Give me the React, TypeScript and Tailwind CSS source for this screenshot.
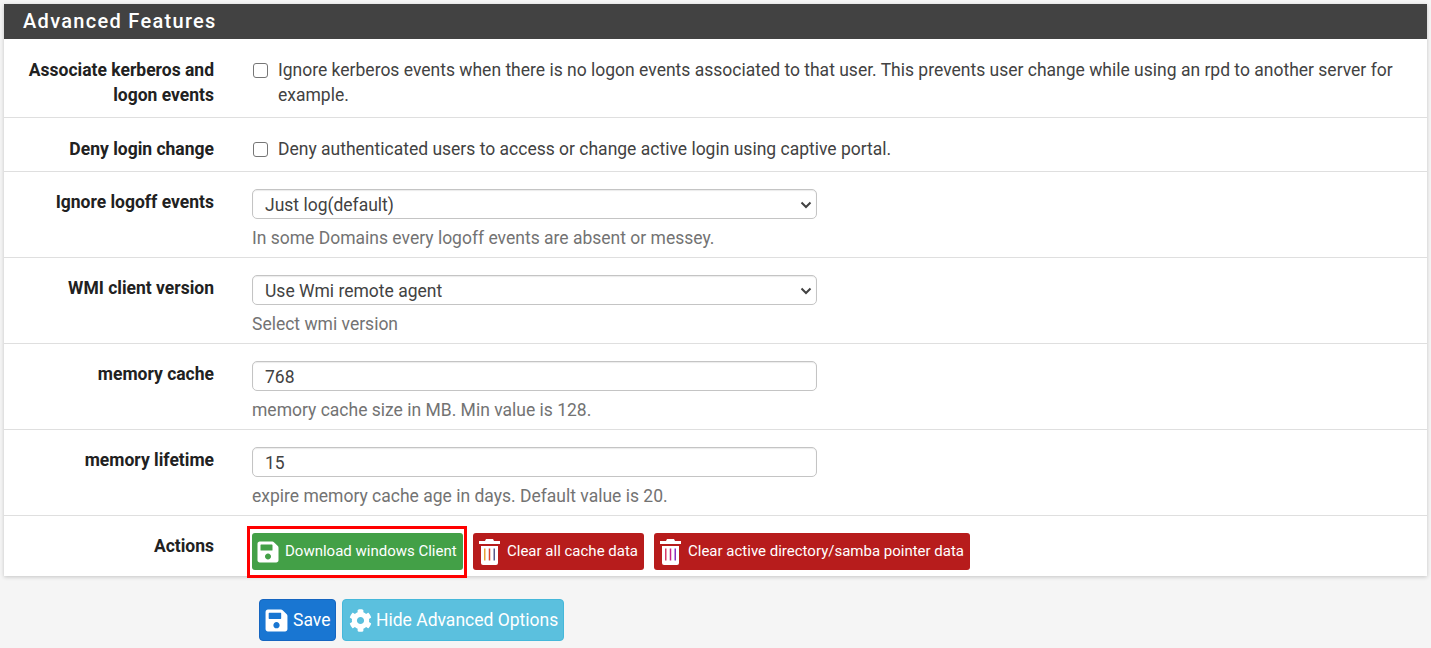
import React from "react";
import { FaCog, FaSave } from "react-icons/fa";

// Trash icon, the stripes pick up the colour fringes seen in the screenshot
const Trash = ({ stripes }: { stripes: string[] }) => (
  <svg width="21" height="27" viewBox="0 0 21 27" className="shrink-0">
    <path d="M7 1h7l1 2h6v3H0V3h6z" fill="#fff" />
    <path d="M2 8h17v17a2 2 0 0 1-2 2H4a2 2 0 0 1-2-2z" fill="#fff" />
    <rect x="5" y="10.500" width="1.500" height="12" fill={stripes[0]} />
    <rect x="9.750" y="10.500" width="1.500" height="12" fill={stripes[1]} />
    <rect x="14.500" y="10.500" width="1.500" height="12" fill={stripes[2]} />
  </svg>
);

const Row = ({
  label,
  children,
  className = "",
  labelClass = "pt-[18px]",
}: {
  label: React.ReactNode;
  children: React.ReactNode;
  className?: string;
  labelClass?: string;
}) => (
  <div className={`flex border-b border-[#dfdfdf] last:border-b-0 ${className}`}>
    <div className={`w-[210px] shrink-0 text-right font-bold text-[#212121] leading-[25px] ${labelClass}`}>
      {label}
    </div>
    <div className="ml-[38px] min-w-0 flex-1 pt-[17px] pr-[22px]">{children}</div>
  </div>
);

const CheckText = ({ children, top = "" }: { children: React.ReactNode; top?: string }) => (
  <div className={`flex items-start leading-[25px] ${top}`}>
    <span className="mt-[5px] ml-px h-[15px] w-[15px] shrink-0 rounded-[3px] border border-[#767676] bg-white" />
    <span className="ml-[10px] text-[#424242]">{children}</span>
  </div>
);

const Select = ({ value }: { value: string }) => (
  <div className="relative h-[30px] w-[565px]">
    <select
      defaultValue={value}
      className="h-full w-full appearance-none rounded-[5px] border border-[#c4c4c4] bg-white pt-[2px] pl-3 text-[17.5px] text-[#424242] shadow-[inset_0_1px_1px_rgba(0,0,0,0.08)]"
    >
      <option>{value}</option>
    </select>
    <svg
      width="12"
      height="8"
      viewBox="0 0 12 8"
      className="pointer-events-none absolute top-[12px] right-[5px]"
    >
      <path d="M1.500 1.500 6 6l4.500-4.500" fill="none" stroke="#424242" strokeWidth="2" />
    </svg>
  </div>
);

const TextInput = ({ value }: { value: string }) => (
  <input
    defaultValue={value}
    className="block h-[30px] w-[565px] rounded-[5px] border border-[#c4c4c4] bg-white pt-px pl-3 text-[17.5px] text-[#424242] shadow-[inset_0_1px_1px_rgba(0,0,0,0.08)]"
  />
);

const Help = ({ children }: { children: React.ReactNode }) => (
  <p className="mt-[7px] leading-[24px] text-[#737373]">{children}</p>
);

export default function App() {
  return (
    <div className="min-h-[648px] bg-[#f5f5f5] px-1 pt-1 font-['Roboto',sans-serif] text-[17.5px]">
      <div className="bg-white shadow-[0_1px_4px_rgba(0,0,0,0.2)]">
        <h2 className="flex h-[35px] items-center bg-[#424242] pb-[2px] pl-[19px] text-[20px] font-medium tracking-[1.300px] text-white">
          Advanced Features
        </h2>
        <div className="pt-px">
          <Row label={<>Associate kerberos and<br />logon events</>} className="h-[78px]">
            <CheckText top="mt-px">
              Ignore kerberos events when there is no logon events associated to that user. This prevents user change
              while using an rpd to another server for example.
            </CheckText>
          </Row>
          <Row label="Deny login change" className="h-[54px]" labelClass="pt-[19px]">
            <CheckText top="mt-[2px]">
              Deny authenticated users to access or change active login using captive portal.
            </CheckText>
          </Row>
          <Row label="Ignore logoff events" className="h-[86px]">
            <Select value="Just log(default)" />
            <Help>In some Domains every logoff events are absent or messey.</Help>
          </Row>
          <Row label="WMI client version" className="h-[86px]">
            <Select value="Use Wmi remote agent" />
            <Help>Select wmi version</Help>
          </Row>
          <Row label="memory cache" className="h-[86px]">
            <TextInput value="768" />
            <Help>memory cache size in MB. Min value is 128.</Help>
          </Row>
          <Row label="memory lifetime" className="h-[86px]">
            <TextInput value="15" />
            <Help>expire memory cache age in days. Default value is 20.</Help>
          </Row>
          <Row label="Actions" className="h-[60px]">
            <div className="flex gap-[9px] text-[15px] text-white">
              <button className="relative mr-px flex h-[37px] w-[211px] items-center rounded-[3px] bg-[#43a047] pl-[4px] whitespace-nowrap">
                <FaSave size={24} className="shrink-0" />
                <span className="ml-[5px]">Download windows Client</span>
                <span className="absolute -top-[7px] -right-[4px] -bottom-[8px] -left-[5px] border-[3px] border-[#ff0000]" />
              </button>
              <button className="flex h-[37px] w-[171px] items-center rounded-[3px] bg-[#b71c1c] pl-[6px] whitespace-nowrap">
                <Trash stripes={["#e8a33a", "#d9472f", "#5a5a8a"]} />
                <span className="ml-[7px]">Clear all cache data</span>
              </button>
              <button className="ml-px flex h-[37px] w-[316px] items-center rounded-[3px] bg-[#b71c1c] pl-[6px] whitespace-nowrap">
                <Trash stripes={["#d83a6a", "#c8208a", "#8a30c0"]} />
                <span className="ml-[7px]">Clear active directory/samba pointer data</span>
              </button>
            </div>
          </Row>
        </div>
      </div>
      <div className="mt-[23px] ml-[255px] flex gap-[6px] text-[17.5px] text-white">
        <button className="flex h-[42px] w-[77px] items-center rounded-[4px] border border-[#1565c0] bg-[#1976d2] pl-[4px] whitespace-nowrap">
          <FaSave size={25} className="shrink-0" />
          <span className="ml-[4px]">Save</span>
        </button>
        <button className="flex h-[42px] w-[222px] items-center rounded-[4px] border border-[#46b8da] bg-[#5bc0de] pl-[6px] whitespace-nowrap">
          <FaCog size={23} className="shrink-0" />
          <span className="ml-[4px]">Hide Advanced Options</span>
        </button>
      </div>
    </div>
  );
}
